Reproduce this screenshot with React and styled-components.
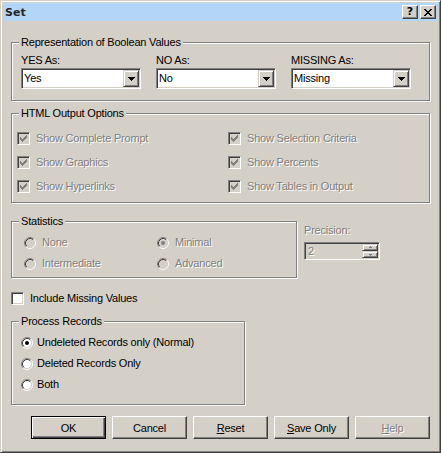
import React from 'react';
import styled, { createGlobalStyle } from 'styled-components';

const Global = createGlobalStyle`
  html, body { margin: 0; padding: 0; background: #d4d0c8; }
  body {
    font-family: "Liberation Sans", Arial, sans-serif;
    font-size: 11px;
    letter-spacing: -0.2px;
    color: #000;
  }
  * { box-sizing: border-box; }
`;

const Window = styled.div`
  width: 441px;
  height: 453px;
  background: #d4d0c8;
  border: 1px solid;
  border-color: #d4d0c8 #404040 #404040 #d4d0c8;
  box-shadow: inset 1px 1px 0 #fff, inset -1px -1px 0 #808080;
  padding: 2px;
  display: flex;
  flex-direction: column;
`;

const TitleBar = styled.div`
  height: 18px;
  background: #b4d6f6;
  display: flex;
  align-items: center;
  justify-content: space-between;
  padding: 0 2px 0 2px;
`;

const Title = styled.span`
  font-family: "DejaVu Sans", Verdana, sans-serif;
  font-weight: bold;
  font-size: 11px;
  letter-spacing: 0;
  color: #262626;
`;

const CapButtons = styled.div`
  display: flex;
  gap: 2px;
`;

const CapBtn = styled.span`
  width: 16px;
  height: 14px;
  display: flex;
  align-items: center;
  justify-content: center;
  background: #d4d0c8;
  border: 1px solid;
  border-color: #fff #404040 #404040 #fff;
  box-shadow: inset -1px -1px 0 #808080;
  font-family: "DejaVu Sans", Verdana, sans-serif;
  font-weight: bold;
  font-size: 11px;
  letter-spacing: 0;
  line-height: 12px;
  color: #000;
`;

const Body = styled.div`
  flex: 1;
  display: flex;
  flex-direction: column;
  padding: 21px 8px 0 8px;
`;

const Group = styled.div`
  position: relative;
  width: ${p => (p.$w ? `${p.$w}px` : 'auto')};
  margin-top: ${p => p.$mt || 0}px;
  border: 1px solid #808080;
  box-shadow: 1px 1px 0 #fff, inset 1px 1px 0 #fff;
  padding: ${p => p.$pad};
`;

const Legend = styled.span`
  position: absolute;
  top: -7px;
  left: 7px;
  padding: 0 2px;
  background: #d4d0c8;
  line-height: 13px;
  white-space: nowrap;
`;

const ComboGrid = styled.div`
  display: grid;
  grid-template-columns: repeat(3, 120px);
  column-gap: 15px;
`;

const Field = styled.div`
  display: flex;
  flex-direction: column;
`;

const Label = styled.span`
  line-height: 13px;
  margin-bottom: ${p => p.$mb || 0}px;
  color: ${p => (p.$disabled ? '#808080' : '#000')};
  text-shadow: ${p => (p.$disabled ? '1px 1px 0 #fff' : 'none')};
  white-space: nowrap;
`;

const Combo = styled.div`
  width: 120px;
  height: 21px;
  display: flex;
  align-items: center;
  background: #fff;
  border: 1px solid;
  border-color: #808080 #fff #fff #808080;
  box-shadow: inset 1px 1px 0 #404040, inset -1px -1px 0 #d4d0c8;
  padding: 1px;
`;

const ComboText = styled.span`
  flex: 1;
  padding-left: 1px;
  line-height: 17px;
  color: #000;
`;

const RaisedBtn = styled.span`
  width: 16px;
  height: ${p => p.$h || 17}px;
  display: flex;
  align-items: center;
  justify-content: center;
  background: #d4d0c8;
  border: 1px solid;
  border-color: #d4d0c8 #404040 #404040 #d4d0c8;
  box-shadow: inset 1px 1px 0 #fff, inset -1px -1px 0 #808080;
`;

const CheckGrid = styled.div`
  display: grid;
  grid-template-columns: ${p => p.$cols};
  grid-auto-rows: ${p => p.$row}px;
`;

const OptionRow = styled.div`
  display: flex;
  align-items: center;
  gap: ${p => p.$gap || 6}px;
  height: ${p => (p.$h ? `${p.$h}px` : 'auto')};
  margin-top: ${p => p.$mt || 0}px;
  white-space: nowrap;
`;

const CheckBoxBox = styled.span`
  width: 13px;
  height: 13px;
  flex-shrink: 0;
  display: flex;
  padding: 2px;
  border: 1px solid;
  border-color: #808080 #fff #fff #808080;
  box-shadow: inset 1px 1px 0 #404040, inset -1px -1px 0 #d4d0c8;
  background: ${p => (p.$disabled ? '#d4d0c8' : '#fff')};
`;

const StatsRow = styled.div`
  display: flex;
  align-items: flex-start;
  margin-top: 18px;
`;

const PrecisionCol = styled.div`
  display: flex;
  flex-direction: column;
  margin-left: 7px;
  margin-top: 3px;
`;

const Spinner = styled.div`
  width: 76px;
  height: 18px;
  margin-top: 5px;
  display: flex;
  align-items: center;
  background: #d4d0c8;
  border: 1px solid;
  border-color: #808080 #fff #fff #808080;
  box-shadow: inset 1px 1px 0 #404040, inset -1px -1px 0 #d4d0c8;
  padding: 1px;
`;

const SpinText = styled.span`
  flex: 1;
  padding-left: 2px;
  line-height: 14px;
  color: #808080;
  text-shadow: 1px 1px 0 #fff;
`;

const SpinButtons = styled.div`
  display: flex;
  flex-direction: column;
`;

const ButtonRow = styled.div`
  display: flex;
  justify-content: flex-end;
  gap: 6px;
  margin-top: 11px;
`;

const Button = styled.button`
  width: 75px;
  height: 23px;
  padding: 0;
  background: #d4d0c8;
  font-family: "Liberation Sans", Arial, sans-serif;
  font-size: 11px;
  letter-spacing: -0.2px;
  color: ${p => (p.$disabled ? '#808080' : '#000')};
  text-shadow: ${p => (p.$disabled ? '1px 1px 0 #fff' : 'none')};
  border: 1px solid;
  border-color: ${p => (p.$default ? '#000' : '#fff #404040 #404040 #fff')};
  box-shadow: ${p =>
    p.$default
      ? 'inset 1px 1px 0 #fff, inset -1px -1px 0 #404040, inset -2px -2px 0 #808080'
      : 'inset -1px -1px 0 #808080'};
  cursor: default;
  outline: none;
`;

const U = styled.span`
  text-decoration: underline;
`;

const Check = ({ color }) => (
  <svg width="7" height="7" viewBox="0 0 7 7" fill={color}>
    <path d="M0 2h1v3h-1zM1 3h1v3h-1zM2 4h1v3h-1zM3 3h1v3h-1zM4 2h1v3h-1zM5 1h1v3h-1zM6 0h1v3h-1z" />
  </svg>
);

const CheckBox = ({ checked, disabled }) => (
  <CheckBoxBox $disabled={disabled}>
    {checked && <Check color={disabled ? '#808080' : '#000'} />}
  </CheckBoxBox>
);

const Radio = ({ checked, disabled }) => (
  <svg width="12" height="12" viewBox="0 0 12 12" style={{ flexShrink: 0 }}>
    <circle cx="6" cy="6" r="4.2" fill={disabled ? '#d4d0c8' : '#fff'} />
    <path d="M2.11 9.89A5.5 5.5 0 0 1 9.89 2.11" fill="none" stroke="#808080" />
    <path d="M9.89 2.11A5.5 5.5 0 0 1 2.11 9.89" fill="none" stroke="#fff" />
    <path d="M2.82 9.18A4.5 4.5 0 0 1 9.18 2.82" fill="none" stroke="#404040" />
    <path d="M9.18 2.82A4.5 4.5 0 0 1 2.82 9.18" fill="none" stroke="#d4d0c8" />
    {checked && <circle cx="6" cy="6" r="2" fill={disabled ? '#808080' : '#000'} />}
  </svg>
);

const Arrow = () => (
  <svg width="7" height="4" viewBox="0 0 7 4" fill="#000">
    <path d="M0 0h7v1h-1v1h-1v1h-1v1h-1v-1h-1v-1h-1v-1h-1z" />
  </svg>
);

const SmallArrow = ({ up }) => (
  <svg width="5" height="3" viewBox="0 0 5 3" fill="#808080" style={{ transform: up ? 'none' : 'rotate(180deg)' }}>
    <path d="M2 0h1v1h1v1h-3v-1h1z" />
  </svg>
);

const CloseGlyph = () => (
  <svg width="8" height="7" viewBox="0 0 8 7" fill="#000">
    <path d="M0 0h2v1h-2zM6 0h2v1h-2zM1 1h2v1h-2zM5 1h2v1h-2zM2 2h4v1h-4zM3 3h2v1h-2zM2 4h4v1h-4zM1 5h2v1h-2zM5 5h2v1h-2zM0 6h2v1h-2zM6 6h2v1h-2z" />
  </svg>
);

const ComboField = ({ label, value }) => (
  <Field>
    <Label $mb={1}>{label}</Label>
    <Combo>
      <ComboText>{value}</ComboText>
      <RaisedBtn>
        <Arrow />
      </RaisedBtn>
    </Combo>
  </Field>
);

const htmlOptions = [
  'Show Complete Prompt',
  'Show Selection Criteria',
  'Show Graphics',
  'Show Percents',
  'Show Hyperlinks',
  'Show Tables in Output',
];

const stats = [
  { label: 'None', checked: false },
  { label: 'Minimal', checked: true },
  { label: 'Intermediate', checked: false },
  { label: 'Advanced', checked: false },
];

const records = [
  { label: 'Undeleted Records only (Normal)', checked: true },
  { label: 'Deleted Records Only', checked: false },
  { label: 'Both', checked: false },
];

export default function App() {
  return (
    <>
      <Global />
      <Window>
        <TitleBar>
          <Title>Set</Title>
          <CapButtons>
            <CapBtn>?</CapBtn>
            <CapBtn>
              <CloseGlyph />
            </CapBtn>
          </CapButtons>
        </TitleBar>
        <Body>
          <Group $pad="11px 9px 11px 9px">
            <Legend>Representation of Boolean Values</Legend>
            <ComboGrid>
              <ComboField label="YES As:" value="Yes" />
              <ComboField label="NO As:" value="No" />
              <ComboField label="MISSING As:" value="Missing" />
            </ComboGrid>
          </Group>

          <Group $mt={12} $pad="12px 5px 4px 5px">
            <Legend>HTML Output Options</Legend>
            <CheckGrid $cols="211px 1fr" $row={24}>
              {htmlOptions.map(t => (
                <OptionRow key={t}>
                  <CheckBox checked disabled />
                  <Label $disabled>{t}</Label>
                </OptionRow>
              ))}
            </CheckGrid>
          </Group>

          <StatsRow>
            <Group $w={286} $pad="10px 12px 3px 12px">
              <Legend>Statistics</Legend>
              <CheckGrid $cols="133px 1fr" $row={21}>
                {stats.map(s => (
                  <OptionRow key={s.label} $gap={6}>
                    <Radio checked={s.checked} disabled />
                    <Label $disabled>{s.label}</Label>
                  </OptionRow>
                ))}
              </CheckGrid>
            </Group>
            <PrecisionCol>
              <Label $disabled>Precision:</Label>
              <Spinner>
                <SpinText>2</SpinText>
                <SpinButtons>
                  <RaisedBtn $h={7}>
                    <SmallArrow up />
                  </RaisedBtn>
                  <RaisedBtn $h={7}>
                    <SmallArrow />
                  </RaisedBtn>
                </SpinButtons>
              </Spinner>
            </PrecisionCol>
          </StatsRow>

          <OptionRow $mt={14} $h={13}>
            <CheckBox />
            <Label>Include Missing Values</Label>
          </OptionRow>

          <Group $w={234} $mt={16} $pad="10px 9px 9px 9px">
            <Legend>Process Records</Legend>
            <CheckGrid $cols="1fr" $row={21}>
              {records.map(r => (
                <OptionRow key={r.label} $gap={4}>
                  <Radio checked={r.checked} />
                  <Label>{r.label}</Label>
                </OptionRow>
              ))}
            </CheckGrid>
          </Group>

          <ButtonRow>
            <Button $default>OK</Button>
            <Button>Cancel</Button>
            <Button>
              <U>R</U>eset
            </Button>
            <Button>
              <U>S</U>ave Only
            </Button>
            <Button $disabled>
              <U>H</U>elp
            </Button>
          </ButtonRow>
        </Body>
      </Window>
    </>
  );
}
